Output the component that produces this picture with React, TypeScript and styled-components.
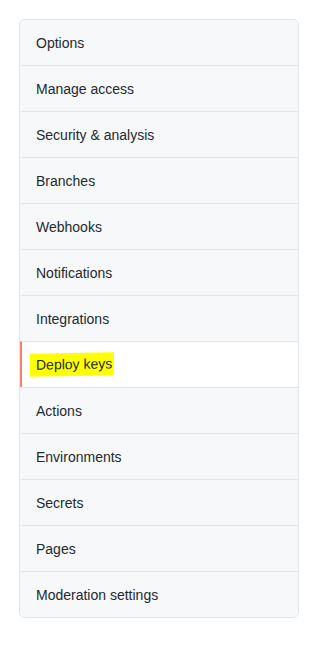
import styled, { createGlobalStyle } from 'styled-components';

const GlobalStyle = createGlobalStyle`
  body {
    margin: 0;
    background: #ffffff;
    font-family: "Liberation Sans", Arial, sans-serif;
  }
`;

const items = [
  'Options',
  'Manage access',
  'Security & analysis',
  'Branches',
  'Webhooks',
  'Notifications',
  'Integrations',
  'Deploy keys',
  'Actions',
  'Environments',
  'Secrets',
  'Pages',
  'Moderation settings',
];

const Page = styled.div`
  padding: 19px 30px 0 19px;
`;

const Menu = styled.nav`
  width: 280px;
  box-sizing: border-box;
  border: 1px solid #e1e4e8;
  border-radius: 6px;
  background: #f6f8fa;
  overflow: hidden;
`;

const Item = styled.a<{ selected?: boolean }>`
  display: flex;
  align-items: center;
  height: 45px;
  padding-left: 14px;
  border-top: 1px solid #e1e4e8;
  border-left: 2px solid ${p => (p.selected ? '#f9826c' : 'transparent')};
  background: ${p => (p.selected ? '#ffffff' : '#f6f8fa')};
  color: #24292e;
  font-size: 14px;
  text-decoration: none;
  cursor: pointer;

  &:first-child {
    border-top: none;
  }
`;

const Highlight = styled.span`
  background: #ffff00;
  margin-left: -6px;
  padding: 3px 2px 4px 6px;
  transform: skewY(-1deg);
  display: inline-block;
`;

const App = () => {
  return (
    <>
      <GlobalStyle />
      <Page>
        <Menu>
          {items.map(item => (
            <Item key={item} selected={item === 'Deploy keys'}>
              {item === 'Deploy keys' ? <Highlight>{item}</Highlight> : item}
            </Item>
          ))}
        </Menu>
      </Page>
    </>
  );
};

export default App;
